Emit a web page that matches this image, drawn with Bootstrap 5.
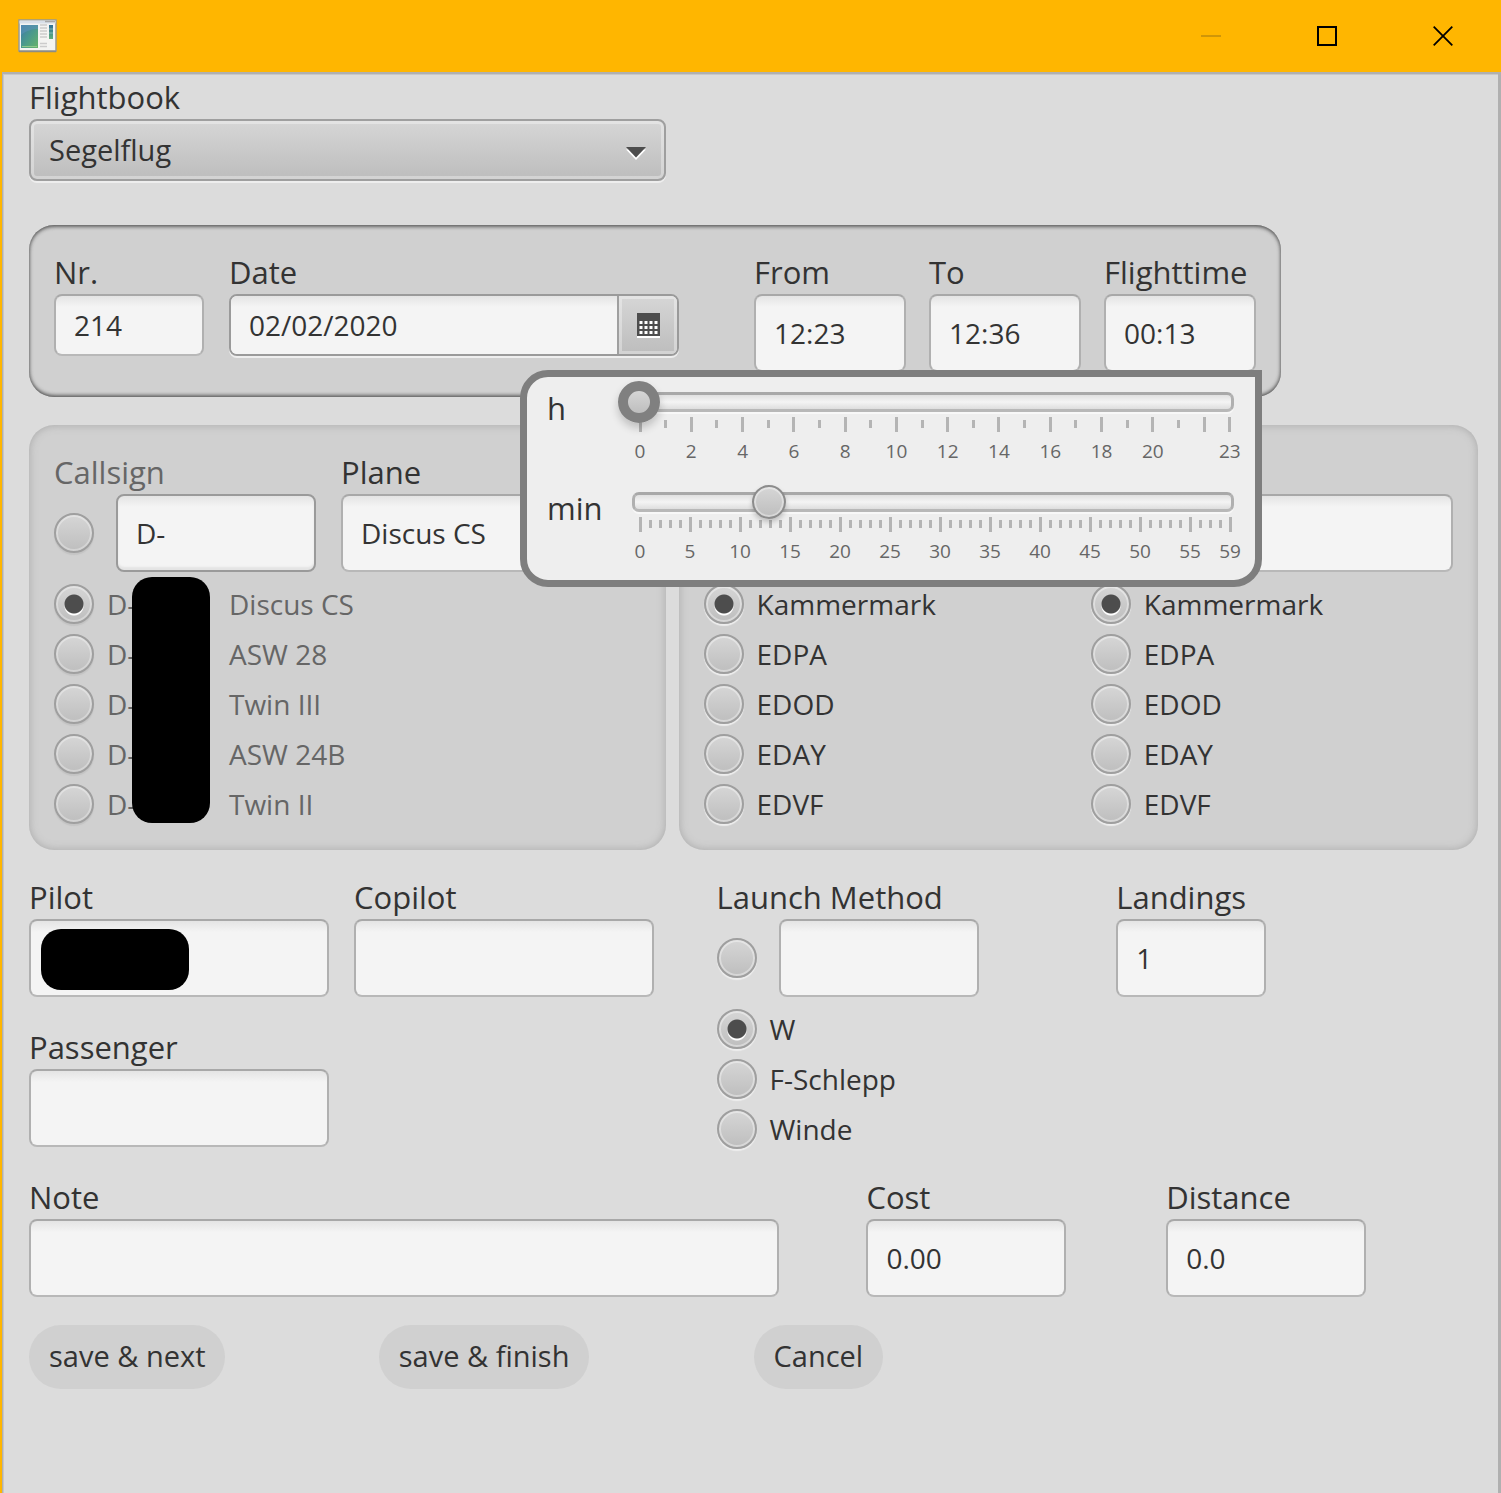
<!DOCTYPE html>
<html lang="en">
<head>
<meta charset="utf-8">
<meta name="viewport" content="width=device-width, initial-scale=1">
<title>Flightbook</title>
<link href="https://cdn.jsdelivr.net/npm/bootstrap@5.3.0/dist/css/bootstrap.min.css" rel="stylesheet">
<style>
  body { font-family: "Open Sans", "Noto Sans", sans-serif; font-size: 28px; line-height: 38px; color: #333; background: #dcdcdc; }
  .app-window { border-left: 2px solid #ffb600; }
  .title-bar { height: 72px; background: #ffb600; padding-left: 16px; }
  .caption-btn { width: 116px; height: 72px; border: 0; background: none; padding: 0; color: #000; display: flex; align-items: center; justify-content: center; }
  .caption-btn:disabled { color: #cf9608; }
  .client { border: solid #b0b0b0; border-width: 2px 3px 0 1px; box-shadow: inset 0 1px #c8c8c8, inset 1px 0 #c8c8c8; padding: 1px 20px 24px 26px; }

  .field-label { display: block; font-size: 31px; line-height: 44px; height: 44px; white-space: nowrap; }
  .dimmed { color: #666; }
  .fx-input { height: 78px; padding: 0 18px; font-size: 28px; color: #333; border: 2px solid; border-color: #a8a8a8 #b0b0b0 #b8b8b8; border-radius: 8px;
    background: linear-gradient(#e4e4e4, #f4f4f4 11px); }
  .fx-input:focus { background: #f4f4f4; border-color: #808080; box-shadow: none; color: #333; }
  .fx-short { height: 62px; }
  .fx-shade { border-color: #9a9a9a; box-shadow: inset 0 -3px 2px #e4e4e4; }
  .fx-raised { box-shadow: inset 0 0 0 3px #ffffff55, 0 2px #eee; background: linear-gradient(#d6d6d6, #bdbdbd); border: 2px solid #9f9f9f; border-radius: 8px; }
  .book-select { height: 62px; padding: 0 18px; font-size: 29px; color: #333; }
  .book-arrow { right: 20px; top: 28px; pointer-events: none; }
  .w-150 { width: 150px; } .w-152 { width: 152px; } .w-200 { width: 200px; } .w-300 { width: 300px; } .w-750 { width: 100%; max-width: 750px; }

  .cols { display: grid; }
  .cols-halves { grid-template-columns: 637fr 800fr; column-gap: 13px; }
  .cols-crew { grid-template-columns: 688fr 400fr 362fr; }
  .cols-note { grid-template-columns: 838fr 300fr 312fr; }
  .cols-actions { grid-template-columns: 350fr 375fr 725fr; }
  .cols-sites { grid-template-columns: 1fr 1fr; column-gap: 25px; }

  .fx-panel { background: #d0d0d0; border-radius: 25px; padding: 25px 25px 21px; box-shadow: inset 0 0 8px #a8a8a8; }
  .fx-panel-active { width: 1252px; max-width: 100%; padding-bottom: 25px; border-radius: 25px; box-shadow: inset 0 3px 4px -2px #555, inset 0 -3px 4px -2px #555, inset 0 0 4px #666; }
  .date-box { width: 450px; height: 62px; border: 2px solid #9a9a9a; border-radius: 8px; box-shadow: 0 2px #eee; overflow: hidden; background: #f4f4f4; }
  .date-box input { border: 0; border-radius: 0; height: 58px; }
  .date-btn { width: 60px; flex: none; border: 0; border-left: 2px solid #9f9f9f; padding: 0; background: linear-gradient(#d6d6d6, #bdbdbd); box-shadow: inset 0 0 0 3px #ffffff55; display: flex; align-items: center; justify-content: center; }

  .fx-radio.form-check-input { float: none; margin: 0; flex: none; width: 40px; height: 40px; border: 2px solid #9f9f9f; background: linear-gradient(#d6d6d6, #bebebe); box-shadow: inset 0 0 0 2px #ffffff60, 0 2px 1px #eee; }
  .fx-radio.form-check-input:checked { border-color: #9f9f9f; background: radial-gradient(circle at 50% 50%, #4d4d4d 9px, transparent 10px), radial-gradient(circle at 50% 20px, #fff 9px, transparent 10px), linear-gradient(#d6d6d6, #bebebe); }
  .soft .fx-radio.form-check-input { box-shadow: inset 0 0 0 2px #ffffff50, 0 2px 1px #c4c4c4; }
  .radio-line { display: flex; align-items: center; gap: 13px; height: 50px; }
  .radio-list { padding-top: 7px; }
  .with-own { display: flex; align-items: center; justify-content: space-between; }
  .call-col { width: 262px; flex: none; }
  .call-key { width: 175px; flex: none; }
  .label-space { height: 44px; }
  .redact { position: absolute; background: #000; border-radius: 20px; }
  .redact-calls { left: 78px; top: 5px; width: 78px; height: 246px; }
  .redact-pilot { left: 12px; top: 10px; width: 148px; height: 61px; }

  .time-pop { position: absolute; z-index: 5; top: 120px; right: -6px; width: 742px; padding: 8px 8px 16px 20px; background: #eee; border: 7px solid #7e7e7e; border-radius: 28px 0 28px 28px; display: grid; grid-template-columns: 75px 1fr; row-gap: 21px; }
  .pop-label { font-size: 31px; line-height: 46px; }
  .rail { position: relative; height: 34px; display: flow-root; }
  .rail::before { content: ""; position: absolute; inset: 7px 13px 7px 10px; border: 3px solid; border-color: #a8a8a8 #b0b0b0 #b8b8b8; border-radius: 7px; background: linear-gradient(#e0e0e0, #f4f4f4 50%, #dedede); box-shadow: 0 2px #f8f8f8; }
  .rail input { position: relative; display: block; width: 100%; height: 34px; margin: 0; appearance: none; background: none; outline: 0; }
  .rail input::-webkit-slider-thumb { appearance: none; width: 34px; height: 34px; border-radius: 50%; border: 2px solid #8c8c8c; background: linear-gradient(#d6d6d6, #bebebe); box-shadow: inset 0 0 0 2px #ffffff60, 0 3px 5px #0003; }
  .rail .thumb-focus { width: calc(100% + 8px); height: 42px; margin: -4px; }
  .rail .thumb-focus::-webkit-slider-thumb { width: 42px; height: 42px; border: 10px solid #808080; box-shadow: 0 5px 8px #0003; }
  .scale { display: flex; justify-content: space-between; margin: -2px 16px 0 17px; font-size: 19px; line-height: 22px; color: #666; }
  .scale-step { width: 2px; display: flex; flex-direction: column; align-items: center; }
  .scale-step::before { content: ""; width: 3px; height: 8px; margin: 3px 0 4px; flex: none; background: #b4b4b4; }
  .scale-step.major::before { height: 15px; margin: 0; }
  .scale-step span { margin-top: 8px; height: 24px; }

  .pill { height: 64px; padding: 0 20px; border: 0; border-radius: 32px; background: #d0d0d0; color: #333; font-size: 29px; line-height: 60px; padding-bottom: 2px; white-space: nowrap; justify-self: start; }
  .mt-21 { margin-top: 21px; } .mt-25 { margin-top: 25px; } .mt-28 { margin-top: 28px; } .mt-44 { margin-top: 44px; } .gap-25 { gap: 25px; } .gap-23 { gap: 23px; }
</style>
</head>
<body>
<div class="app-window min-vh-100 d-flex flex-column">
  <header class="title-bar d-flex align-items-center justify-content-between">
    <svg width="39" height="34" viewBox="0 0 39 34" aria-hidden="true">
      <defs>
        <linearGradient id="pane" x1="0" y1="0" x2="1" y2="1"><stop offset="0" stop-color="#3f78a8"/><stop offset=".5" stop-color="#4a9a8c"/><stop offset="1" stop-color="#66b468"/></linearGradient>
        <linearGradient id="strip" x1="0" y1="0" x2="0" y2="1"><stop offset="0" stop-color="#2f6f96"/><stop offset="1" stop-color="#5fb07a"/></linearGradient>
      </defs>
      <rect x="1" y="1" width="37" height="31" fill="#f4f4f2" stroke="#9a9a90" stroke-width="1.5"/>
      <path d="M1.5 3h36" stroke="#d8dfe8" stroke-width="3"/><path d="M27 2.5h10" stroke="#a8a8a8" stroke-width="1.5"/>
      <rect x="3" y="6" width="17" height="23" fill="url(#pane)"/>
      <path d="M3 16c6-5 12-6 17-6V6H3z" fill="#5c93b8" opacity=".6"/>
      <path d="M4 27.500h15" stroke="#8cc88a"/>
      <path d="M22 6h7M22 9h7M22 12h7M22 15h7M22 18h7M22 24.500h7M22 27.500h7" stroke="#ccc" stroke-width="1.5"/>
      <rect x="31" y="6" width="4" height="14" fill="url(#strip)"/><path d="M31 10h4M31 14h4" stroke="#9cc" stroke-width=".7"/>
      <path d="M1 32.500h37" stroke="#8c8c84" stroke-width="1.500"/>
    </svg>
    <div class="d-flex">
      <button class="caption-btn" type="button" disabled aria-label="Minimize"><svg width="20" height="20"><path d="M0 10h20" stroke="currentColor" stroke-width="2"/></svg></button>
      <button class="caption-btn" type="button" aria-label="Maximize"><svg width="20" height="20"><rect x="1" y="1" width="18" height="18" fill="none" stroke="currentColor" stroke-width="2"/></svg></button>
      <button class="caption-btn" type="button" aria-label="Close"><svg width="20" height="20"><path d="M.7.7l18.600 18.600M19.300.7L.7 19.300" stroke="currentColor" stroke-width="1.800"/></svg></button>
    </div>
  </header>

  <main class="client flex-grow-1">
    <form>
      <div class="cols cols-halves">
        <div>
          <label class="field-label" for="book">Flightbook</label>
          <div class="position-relative">
            <select id="book" class="form-select fx-raised book-select"><option>Segelflug</option></select>
            <svg class="book-arrow position-absolute" width="20" height="14"><path d="M0 2.500h20L10 13z" fill="#fff"/><path d="M0 0h20L10 10.500z" fill="#4d4d4d"/></svg>
          </div>
        </div>
      </div>

      <section class="fx-panel fx-panel-active mt-44 d-flex justify-content-between">
        <div class="d-flex gap-25">
          <div><label class="field-label" for="nr">Nr.</label><input id="nr" class="form-control fx-input fx-short w-150" value="214"></div>
          <div>
            <label class="field-label" for="date">Date</label>
            <div class="date-box d-flex">
              <input id="date" class="form-control fx-input" value="02/02/2020">
              <button class="date-btn" type="button" aria-label="Pick a date">
                <svg width="23" height="25"><path d="M0 2h23v23H0z" fill="#fff"/><path d="M0 0h23v23H0z" fill="#4d4d4d"/><path d="M2.500 9.500h18M2.500 14.500h18M2.500 19.500h18" stroke="#fff" stroke-width="3" stroke-dasharray="3 2"/></svg>
              </button>
            </div>
          </div>
        </div>
        <div class="d-flex gap-23">
          <div><label class="field-label" for="from">From</label><input id="from" class="form-control fx-input w-152" value="12:23"></div>
          <div><label class="field-label" for="to">To</label><input id="to" class="form-control fx-input w-152" value="12:36"></div>
          <div class="position-relative">
            <label class="field-label" for="ftime">Flighttime</label><input id="ftime" class="form-control fx-input w-152" value="00:13">
            <div class="time-pop">
              <label class="pop-label" for="hours">h</label>
              <div>
                <div class="rail"><input id="hours" class="thumb-focus" type="range" min="0" max="23" value="0"></div>
                <div class="scale" data-max="23" data-major="2" data-skip="22"></div>
              </div>
              <label class="pop-label" for="minutes">min</label>
              <div>
                <div class="rail"><input id="minutes" type="range" min="0" max="59" value="13"></div>
                <div class="scale" data-max="59" data-major="5"></div>
              </div>
            </div>
          </div>
        </div>
      </section>

      <div class="cols cols-halves mt-28">
        <section class="fx-panel">
          <div class="d-flex gap-25">
            <div class="call-col">
              <label class="field-label dimmed" for="call">Callsign</label>
              <div class="with-own soft"><input class="form-check-input fx-radio" type="radio" name="call" aria-label="Callsign"><input id="call" class="form-control fx-input fx-shade w-200" value="D-"></div>
            </div>
            <div class="flex-grow-1"><label class="field-label" for="plane">Plane</label><input id="plane" class="form-control fx-input" value="Discus CS"></div>
          </div>
          <div class="radio-list soft dimmed position-relative">
            <div class="d-flex align-items-center"><label class="radio-line call-key"><input class="form-check-input fx-radio" type="radio" name="call" checked>D-</label><span>Discus CS</span></div>
            <div class="d-flex align-items-center"><label class="radio-line call-key"><input class="form-check-input fx-radio" type="radio" name="call">D-</label><span>ASW 28</span></div>
            <div class="d-flex align-items-center"><label class="radio-line call-key"><input class="form-check-input fx-radio" type="radio" name="call">D-</label><span>Twin III</span></div>
            <div class="d-flex align-items-center"><label class="radio-line call-key"><input class="form-check-input fx-radio" type="radio" name="call">D-</label><span>ASW 24B</span></div>
            <div class="d-flex align-items-center"><label class="radio-line call-key"><input class="form-check-input fx-radio" type="radio" name="call">D-</label><span>Twin II</span></div>
            <div class="redact redact-calls"></div>
          </div>
        </section>

        <section class="fx-panel">
          <div class="cols cols-sites">
            <div>
              <div class="label-space"></div>
              <div class="with-own"><input class="form-check-input fx-radio" type="radio" name="start" aria-label="From"><input class="form-control fx-input w-300" aria-label="From"></div>
              <div class="radio-list">
                <label class="radio-line"><input class="form-check-input fx-radio" type="radio" name="start" checked>Kammermark</label>
                <label class="radio-line"><input class="form-check-input fx-radio" type="radio" name="start">EDPA</label>
                <label class="radio-line"><input class="form-check-input fx-radio" type="radio" name="start">EDOD</label>
                <label class="radio-line"><input class="form-check-input fx-radio" type="radio" name="start">EDAY</label>
                <label class="radio-line"><input class="form-check-input fx-radio" type="radio" name="start">EDVF</label>
              </div>
            </div>
            <div>
              <div class="label-space"></div>
              <div class="with-own"><input class="form-check-input fx-radio" type="radio" name="end" aria-label="To"><input class="form-control fx-input w-300" aria-label="To"></div>
              <div class="radio-list">
                <label class="radio-line"><input class="form-check-input fx-radio" type="radio" name="end" checked>Kammermark</label>
                <label class="radio-line"><input class="form-check-input fx-radio" type="radio" name="end">EDPA</label>
                <label class="radio-line"><input class="form-check-input fx-radio" type="radio" name="end">EDOD</label>
                <label class="radio-line"><input class="form-check-input fx-radio" type="radio" name="end">EDAY</label>
                <label class="radio-line"><input class="form-check-input fx-radio" type="radio" name="end">EDVF</label>
              </div>
            </div>
          </div>
        </section>
      </div>

      <div class="cols cols-crew mt-25">
        <div>
          <div class="d-flex gap-25">
            <div><label class="field-label" for="pilot">Pilot</label><div class="position-relative"><input id="pilot" class="form-control fx-input w-300"><div class="redact redact-pilot"></div></div></div>
            <div><label class="field-label" for="copilot">Copilot</label><input id="copilot" class="form-control fx-input w-300"></div>
          </div>
          <label class="field-label mt-28" for="pax">Passenger</label><input id="pax" class="form-control fx-input w-300">
        </div>
        <div>
          <label class="field-label" for="launch">Launch Method</label>
          <div class="with-own call-col"><input class="form-check-input fx-radio" type="radio" name="launch" aria-label="Launch Method"><input id="launch" class="form-control fx-input w-200"></div>
          <div class="radio-list">
            <label class="radio-line"><input class="form-check-input fx-radio" type="radio" name="launch" checked>W</label>
            <label class="radio-line"><input class="form-check-input fx-radio" type="radio" name="launch">F-Schlepp</label>
            <label class="radio-line"><input class="form-check-input fx-radio" type="radio" name="launch">Winde</label>
          </div>
        </div>
        <div><label class="field-label" for="landings">Landings</label><input id="landings" class="form-control fx-input w-150" value="1"></div>
      </div>

      <div class="cols cols-note mt-21">
        <div><label class="field-label" for="note">Note</label><input id="note" class="form-control fx-input w-750"></div>
        <div><label class="field-label" for="cost">Cost</label><input id="cost" class="form-control fx-input w-200" value="0.00"></div>
        <div><label class="field-label" for="distance">Distance</label><input id="distance" class="form-control fx-input w-200" value="0.0"></div>
      </div>

      <div class="cols cols-actions mt-28">
        <button class="pill" type="button">save &amp; next</button>
        <button class="pill" type="button">save &amp; finish</button>
        <button class="pill" type="button">Cancel</button>
      </div>
    </form>
  </main>
</div>
<script src="https://cdn.jsdelivr.net/npm/bootstrap@5.3.0/dist/js/bootstrap.bundle.min.js"></script>
<script>
  // Build each slider's scale: a labelled tick per major step and one at the end.
  document.querySelectorAll('.scale').forEach(function (scale) {
    var max = +scale.dataset.max, major = +scale.dataset.major;
    for (var i = 0; i <= max; i++) {
      var step = document.createElement('div');
      step.className = 'scale-step';
      if (i % major === 0 || i === max) {
        step.classList.add('major');
        var text = document.createElement('span');
        if (String(i) !== scale.dataset.skip) text.textContent = i;
        step.appendChild(text);
      }
      scale.appendChild(step);
    }
  });
</script>
</body>
</html>
